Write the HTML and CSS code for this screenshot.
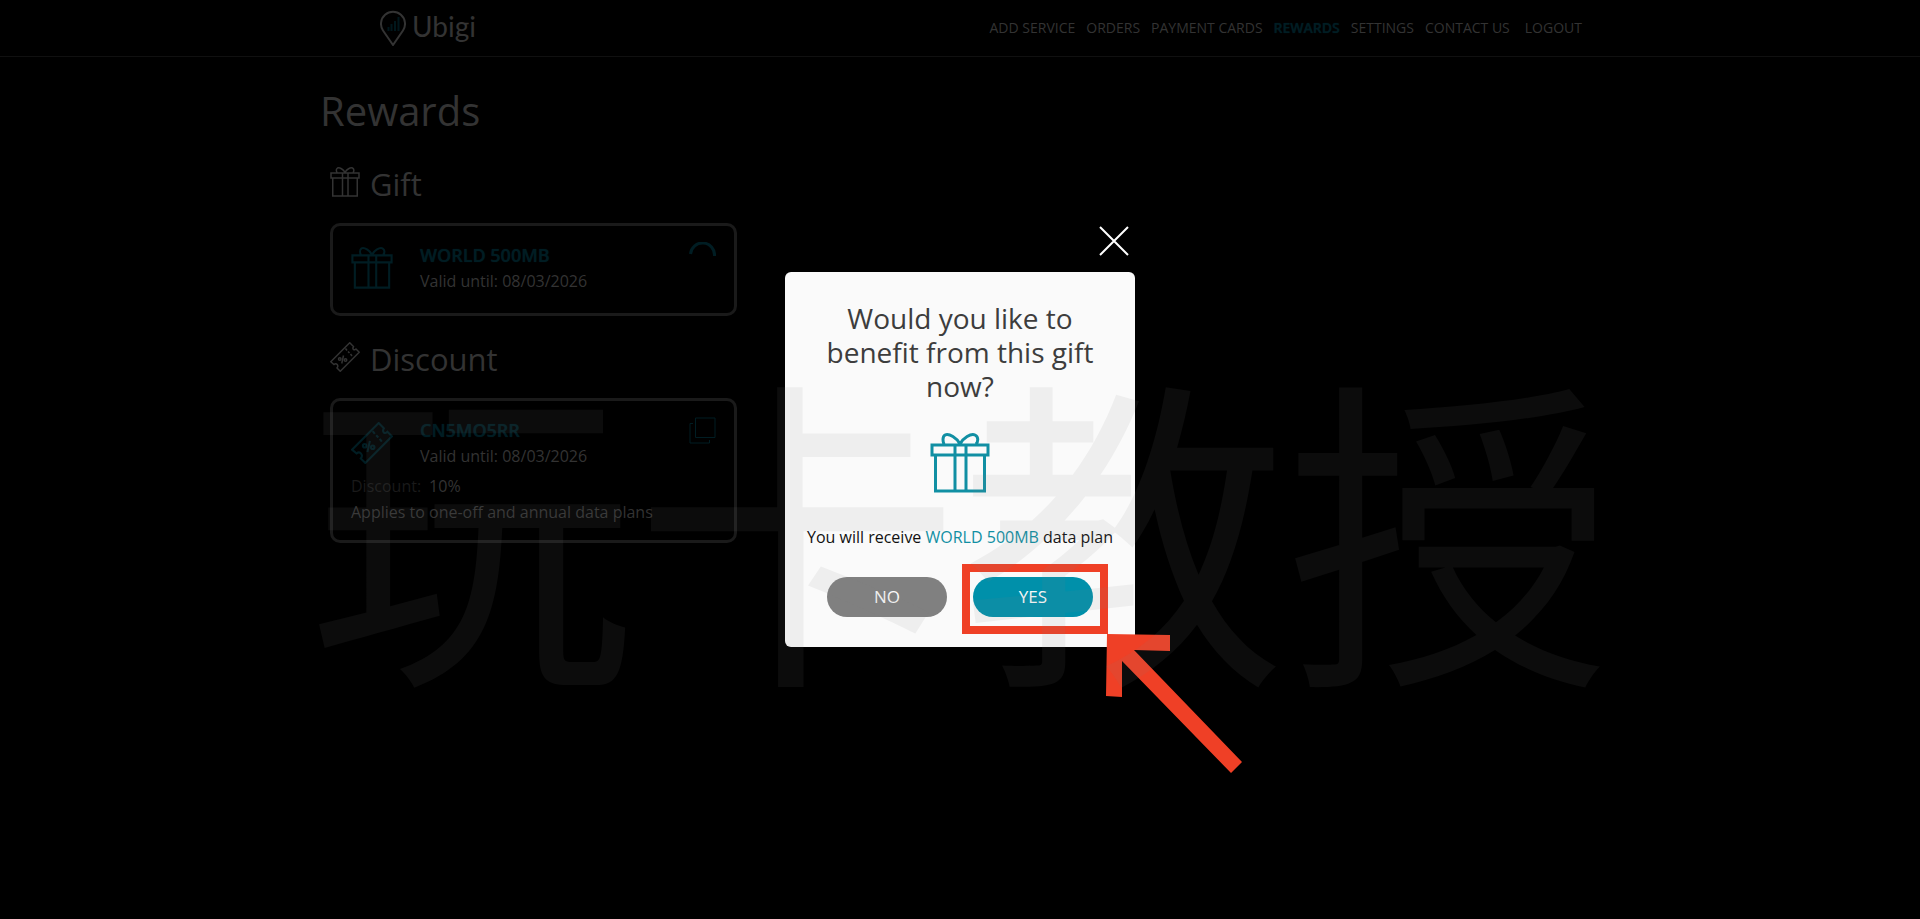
FILE: index.html
```html
<!DOCTYPE html>
<html lang="en">
<head>
<meta charset="utf-8">
<meta name="viewport" content="width=device-width, initial-scale=1">
<title>Ubigi - Rewards</title>
<link rel="stylesheet" href="styles.css">
</head>
<body>
<svg class="sprite" aria-hidden="true">
  <symbol id="gift" viewBox="0 0 60 60">
    <path d="M2 12H58V22H2ZM5.500 22H54.500V58H5.500ZM25 12V58M36 12V58M30 11C27 5 19 0 15 2C12 4 13 9 14 11M30 11C33 5 41 0 45 2C49 4 48 9 46 11"/>
  </symbol>
  <symbol id="ticket" viewBox="0 0 60 60">
    <path d="M39.500 1.500L47 9C44 14 48 18 52 14L58.500 20.500L20.500 58.500L14 52C18 47 13 41 8 45L1.500 39.500ZM31 13L34 17M36 19L39 22M41 24L44 28M27 27L23.500 43"/>
    <circle cx="19.500" cy="34" r="2.500"/><circle cx="31" cy="36" r="2.500"/>
  </symbol>
</svg>

<header class="header">
  <div class="header-inner">
    <a class="logo" href="#">
      <svg class="logo-pin" viewBox="0 0 26 36" aria-hidden="true">
        <path class="pin" d="M13 35L3 20.500A12 12 0 1 1 23 20.500Z"/>
        <path class="bars" d="M8.500 21V17M11.500 21V14M15 21V11M18.500 21V7"/>
      </svg>
      <span>Ubigi</span>
    </a>
    <nav class="nav">
      <a href="#">ADD SERVICE</a>
      <a href="#">ORDERS</a>
      <a href="#">PAYMENT CARDS</a>
      <a href="#" class="active">REWARDS</a>
      <a href="#">SETTINGS</a>
      <a href="#">CONTACT US</a>
      <a href="#" class="logout">LOGOUT</a>
    </nav>
  </div>
</header>

<main class="page">
  <h1>Rewards</h1>
  <section class="section">
    <h2><svg class="icon-small" aria-hidden="true"><use href="#gift"/></svg>Gift</h2>
    <div class="grid">
      <article class="card">
        <div class="card-head">
          <svg class="icon-card" aria-hidden="true"><use href="#gift"/></svg>
          <div>
            <h3>WORLD 500MB</h3>
            <p>Valid until: 08/03/2026</p>
          </div>
          <svg class="card-action spinner" viewBox="0 0 27 27" aria-hidden="true"><path d="M1.500 12A12 12 0 0 1 25.500 14"/></svg>
        </div>
      </article>
    </div>
  </section>
  <section class="section">
    <h2><svg class="icon-small" aria-hidden="true"><use href="#ticket"/></svg>Discount</h2>
    <div class="grid">
      <article class="card">
        <div class="card-head">
          <svg class="icon-card" aria-hidden="true"><use href="#ticket"/></svg>
          <div>
            <h3>CN5MO5RR</h3>
            <p>Valid until: 08/03/2026</p>
          </div>
          <button class="card-action" type="button" aria-label="Copy code">
            <svg class="copy" viewBox="0 0 27 27" aria-hidden="true"><path d="M6.500 1H26V20.500H6.500ZM4 6.500H1V26H20.500V23"/></svg>
          </button>
        </div>
        <p><span class="label">Discount:</span>10%</p>
        <p>Applies to one-off and annual data plans</p>
      </article>
    </div>
  </section>
</main>

<div class="overlay">
  <div class="modal" role="dialog" aria-labelledby="modal-title">
    <button class="close" type="button" aria-label="Close">
      <svg viewBox="0 0 30 30" aria-hidden="true"><path d="M1 1L29 29M29 1L1 29"/></svg>
    </button>
    <h2 id="modal-title">Would you like to benefit from this gift now?</h2>
    <svg class="icon-modal" aria-hidden="true"><use href="#gift"/></svg>
    <p class="message">You will receive <span>WORLD 500MB</span> data plan</p>
    <div class="actions">
      <button class="btn btn-no" type="button">NO</button>
      <div class="marked">
        <button class="btn btn-yes" type="button">YES</button>
        <span class="frame"></span>
      </div>
    </div>
    <svg class="arrow" viewBox="0 0 136 140" aria-hidden="true"><path d="M1 0L64 1V17L28 16L136 128L125 139L16 27V63L0 62Z"/></svg>
  </div>
</div>
<div class="watermark" lang="zh" aria-hidden="true">玩卡教授</div>
</body>
</html>
```

FILE: styles.css
```css
* { box-sizing: border-box; }
body {
  margin: 0;
  background: #000;
  color: #333;
  font: 16px/26px "Open Sans", "Noto Sans", sans-serif;
}
h1, h2, h3, p { margin: 0; font-weight: 400; }
a { color: inherit; text-decoration: none; }
button { border: 0; padding: 0; background: none; font: inherit; cursor: pointer; }
svg { display: block; flex: none; fill: none; stroke: currentColor; }
.sprite { position: absolute; width: 0; height: 0; }

.header { border-bottom: 1px solid #101010; }
.header-inner {
  display: flex;
  align-items: center;
  justify-content: space-between;
  max-width: 1280px;
  min-height: 56px;
  margin: 0 auto;
  padding: 0 18px 0 60px;
}
.logo {
  display: flex;
  align-items: flex-start;
  gap: 6px;
  font: 400 28px/32px Lato, sans-serif;
}
.logo-pin { width: 26px; height: 36px; }
.pin { stroke-width: 2; }
.bars { stroke: #00171c; stroke-width: 2; }
.nav { display: flex; gap: 11px; font-size: 14px; }
.active { color: #001d23; font-weight: 600; text-shadow: 0 0 1px currentColor; }
.logout { margin-left: 4px; }

.page { max-width: 1280px; margin: 0 auto; padding-top: 26px; }
h1 { font-size: 40px; line-height: 56px; }
.section { padding: 0 10px; margin-bottom: 26px; }
h1 + .section { margin-top: 28px; }
.section h2 {
  display: flex;
  gap: 10px;
  margin-bottom: 22px;
  font-size: 31px;
  line-height: 34px;
}
.icon-small { width: 30px; height: 30px; stroke-width: 3; }
.grid {
  display: grid;
  grid-template-columns: repeat(3, 1fr);
  gap: 20px;
}
.card { border: 3px solid #1a1a1a; border-radius: 10px; padding: 16px 18px 15px; }
.card-head { display: flex; align-items: center; padding-bottom: 4px; }
.card-head h3 {
  color: #001d23;
  font-size: 18px;
  line-height: 26px;
  font-weight: 600;
  text-shadow: 0 0 1px currentColor;
}
.icon-card { width: 42px; height: 42px; margin-right: 27px; color: #001d23; stroke-width: 3; }
.card-action { align-self: flex-start; margin-left: auto; color: #001d23; }
.spinner { width: 27px; height: 27px; stroke-width: 3; }
.copy { width: 27px; height: 27px; }
.label { margin-right: 8px; color: #1a1a1a; }

.overlay {
  position: fixed;
  inset: 0;
  display: flex;
  align-items: center;
  justify-content: center;
}
.modal {
  position: relative;
  display: flex;
  flex-direction: column;
  align-items: center;
  width: 350px;
  padding: 29px 20px 30px;
  border-radius: 6px;
  background: #fafafa;
  color: #111;
  text-align: center;
}
.modal h2 { color: #3d3d3d; font-size: 28px; line-height: 34px; }
.close { position: absolute; right: 6px; top: -46px; color: #fff; }
.close svg { width: 30px; height: 30px; stroke-width: 2; }
.icon-modal { width: 60px; height: 60px; margin: 30px 0 32px; color: #118fa3; stroke-width: 3; }
.message { line-height: 24px; white-space: nowrap; }
.message span { color: #118fa3; }
.actions { display: flex; gap: 26px; margin-top: 28px; }
.btn { width: 120px; height: 40px; border-radius: 20px; color: #fafafa; font-size: 17px; font-weight: 500; }
.btn-no { background: #808080; }
.btn-yes { display: block; background: #0090aa; }
.marked { position: relative; }
.frame { position: absolute; inset: -13px -15px -17px -11px; border: 8px solid #ef4026; pointer-events: none; }
.arrow {
  position: absolute;
  left: 321px;
  top: 362px;
  width: 136px;
  height: 140px;
  fill: #ef4026;
  stroke: none;
  pointer-events: none;
}

.watermark {
  position: fixed;
  inset: 0;
  display: flex;
  align-items: center;
  justify-content: center;
  padding-top: 118px;
  color: rgba(128, 128, 128, 0.095);
  font: 326px/1 "Noto Sans CJK SC", sans-serif;
  white-space: nowrap;
  pointer-events: none;
}
```
